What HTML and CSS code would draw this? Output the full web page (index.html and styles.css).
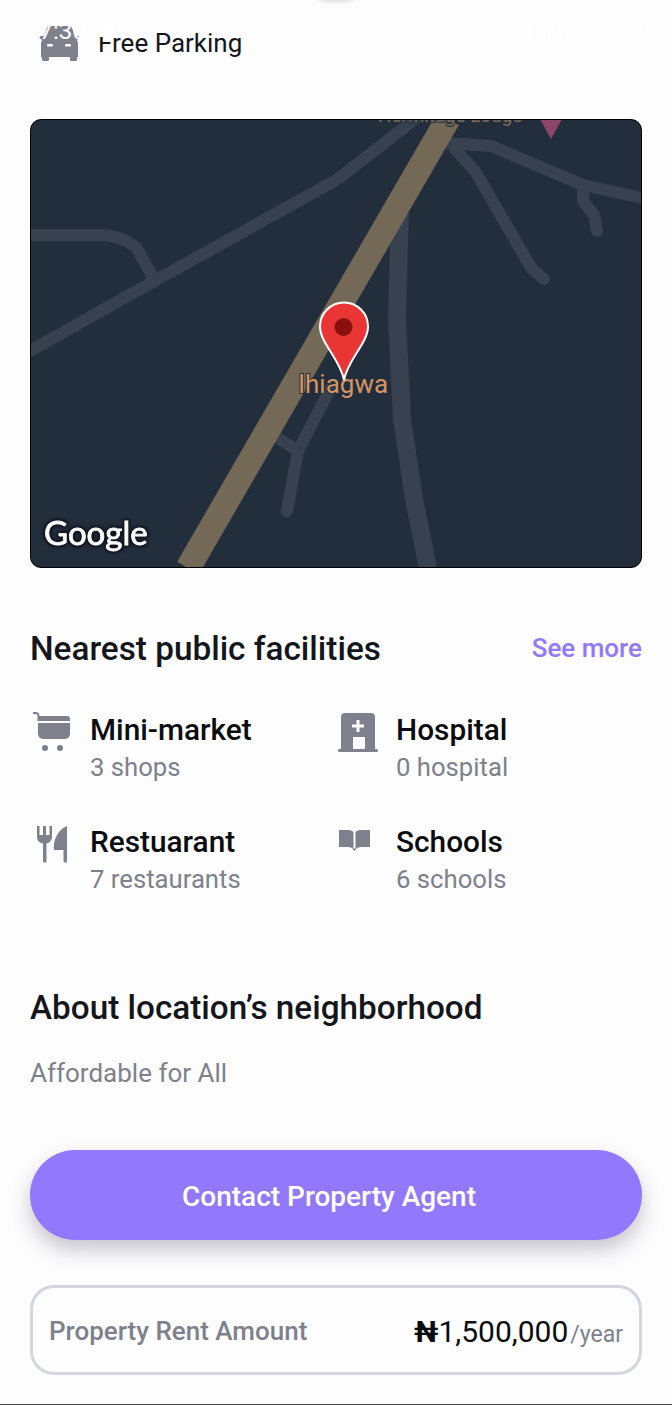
FILE: index.html
```html
<!DOCTYPE html>
<html lang="en">
<head>
  <meta charset="UTF-8" />
  <meta name="viewport" content="width=device-width, initial-scale=1" />
  <title>Property details</title>
  <link rel="stylesheet" href="styles.css">
</head>
<body>
  <div class="notch"></div>

  <div class="status-bar">
    <span class="status-time">17:30</span>
    <svg class="status-gear" width="20" height="20" viewBox="0 0 20 20"><path fill="#fff" d="M10 1l3 3h4v4l2 2-2 2v4h-4l-3 3-3-3H3v-4l-2-2 2-2V4h4z"/></svg>
    <span class="status-right">
      <span>(•)</span>
      <span>.ıl .ıl</span>
      <span class="status-speed">305<br>B/s</span>
      <svg width="38" height="18" viewBox="0 0 38 18"><rect x="1" y="1" width="34" height="16" rx="4" fill="none" stroke="#fff" stroke-width="2"/></svg>
    </span>
  </div>

  <div class="amenity">
    <svg class="amenity-icon" width="42" height="36" viewBox="0 0 42 36">
      <path fill="#7e818c" d="M11 1h20q2 0 3 2l3 8h3q1.500 0 1.500 1.500T40 14l-1 1 1 3v14h-1v2.500a1.500 1.500 0 0 1-1.500 1.500h-4a1.500 1.500 0 0 1-1.500-1.500V32H11v2.500A1.500 1.500 0 0 1 9.500 36h-4A1.500 1.500 0 0 1 4 34.500V32H3V18l1-3-1-1q-1.500 0-1.500-1.500T3 11h3l3-8q1-2 2-2z"/>
      <rect x="9" y="19" width="6" height="2.500" rx="1" fill="#fdfdfe"/>
      <rect x="27" y="19" width="6" height="2.500" rx="1" fill="#fdfdfe"/>
    </svg>
    <span>Free Parking</span>
  </div>

  <div class="map">
    <svg class="map-art" width="612" height="449" viewBox="0 0 612 449">
      <g fill="none" stroke="#37414f" stroke-width="12" stroke-linecap="round" stroke-linejoin="round">
        <path d="M0 116H72Q92 117 106 128L124 160"/>
        <path d="M0 232L128 160L308 60L385 0"/>
        <path d="M370 90L367 200L372 300L384 380L398 449" stroke-width="18" stroke-linecap="butt"/>
        <path d="M243 316L268 332L257 392"/>
        <path d="M268 332L300 270"/>
        <path d="M418 24L461 27L553 66L612 79"/>
        <path d="M425 30L445 52L502 150L514 160"/>
        <path d="M553 66L553 82L564 96L567 112"/>
      </g>
      <path d="M418 0L158 449" fill="none" stroke="#746856" stroke-width="25"/>
      <path d="M510 0h22l-11 20z" fill="#8c4468"/>
      <text class="map-poi" x="348" y="3">Hermitage Lodge</text>
      <text class="map-label" x="313" y="274" text-anchor="middle">Ihiagwa</text>
      <path d="M314 261C310 240 290 224 290 207.500A24 24 0 1 1 338 207.500C338 224 318 240 314 261Z" fill="#ea3535" stroke="#fff" stroke-width="2"/>
      <circle cx="313.500" cy="208" r="9" fill="#8a0f0f"/>
      <text class="map-logo" x="14" y="426">Google</text>
    </svg>
  </div>

  <div class="section-head">
    <h2>Nearest public facilities</h2>
    <a class="see-more">See more</a>
  </div>

  <div class="facilities">
    <div class="facility">
      <svg class="facility-icon" width="42" height="42" viewBox="0 0 42 42">
        <path fill="none" stroke="#7e818c" stroke-width="2" d="M3 3h2.500q3 0 3 3v5"/>
        <path fill="#7e818c" d="M8 6h29a3 3 0 0 1 3 3v2H8z"/>
        <path fill="#7e818c" d="M8 13h32v11a5 5 0 0 1-5 5H13a5 5 0 0 1-5-5z"/>
        <circle cx="15" cy="38" r="3" fill="#7e818c"/>
        <circle cx="30" cy="38" r="3" fill="#7e818c"/>
      </svg>
      <div>
        <div class="facility-name">Mini-market</div>
        <div class="facility-count">3 shops</div>
      </div>
    </div>
    <div class="facility">
      <svg class="facility-icon" width="44" height="42" viewBox="0 0 44 42">
        <path fill="#7e818c" d="M9 3h26a4 4 0 0 1 4 4v33H5V7a4 4 0 0 1 4-4z"/>
        <rect x="2" y="39" width="40" height="3" rx="1.500" fill="#7e818c"/>
        <rect x="17" y="27" width="12" height="12" fill="#fdfdfe"/>
        <path fill="#fdfdfe" d="M20.500 10h3v4.500H28v3h-4.500V22h-3v-4.500H16v-3h4.500z"/>
      </svg>
      <div>
        <div class="facility-name">Hospital</div>
        <div class="facility-count">0 hospital</div>
      </div>
    </div>
    <div class="facility">
      <svg class="facility-icon" width="42" height="42" viewBox="0 0 42 42">
        <path fill="#7e818c" d="M7 4h2.500v9H13V4h3v9h3.500V4H22v11a7 7 0 0 1-5.500 6.500V39a1.700 1.700 0 0 1-3.500 0V21.500A7 7 0 0 1 7 15z"/>
        <path fill="#7e818c" d="M37 4v35a1.700 1.700 0 0 1-3.500 0V28H24c-1-9 3-20 13-24z"/>
      </svg>
      <div>
        <div class="facility-name">Restuarant</div>
        <div class="facility-count">7 restaurants</div>
      </div>
    </div>
    <div class="facility">
      <svg class="facility-icon" width="44" height="42" viewBox="0 0 44 42">
        <path fill="#7e818c" d="M3 8h9c3 0 5 1 5.500 2.500V27c-2-1.500-4-2-7-2H3z"/>
        <path fill="#7e818c" d="M34 8h-9c-3 0-5 1-5.500 2.500V27c2-1.500 4-2 7-2H34z"/>
        <path fill="#7e818c" d="M16 26.500h5L18.500 29z"/>
      </svg>
      <div>
        <div class="facility-name">Schools</div>
        <div class="facility-count">6 schools</div>
      </div>
    </div>
  </div>

  <h2 class="about-title">About location’s neighborhood</h2>
  <p class="about-text">Affordable for All</p>

  <button class="contact-btn">Contact Property Agent</button>

  <div class="rent-box">
    <span class="rent-label">Property Rent Amount</span>
    <span class="rent-value"><b class="naira">₦</b><b>1,500,000</b><small>/year</small></span>
  </div>

  <div class="bottom-line"></div>
</body>
</html>
```

FILE: styles.css
```css
* {
  box-sizing: border-box;
}

body {
  margin: 0;
  padding: 0 30px;
  height: 1405px;
  overflow: hidden;
  position: relative;
  font-family: Roboto, 'Noto Sans', sans-serif;
  background: #fdfdfe;
  color: #14161b;
  display: flex;
  flex-direction: column;
}

.notch {
  position: absolute;
  top: -8px;
  left: 318px;
  width: 36px;
  height: 10px;
  border-radius: 50%;
  background: #d8d8da;
  filter: blur(2px);
}

.status-bar {
  position: absolute;
  top: 17px;
  left: 26px;
  right: 22px;
  display: flex;
  align-items: center;
  color: #fff;
  font-size: 24px;
  z-index: 2;
}

.status-gear {
  margin-left: 11px;
}

.status-right {
  margin-left: auto;
  display: flex;
  align-items: center;
  gap: 10px;
  font-size: 18px;
}

.status-speed {
  font-size: 11px;
  line-height: 11px;
  text-align: center;
}

.amenity {
  display: flex;
  align-items: center;
  gap: 18px;
  margin-top: 25px;
  padding-left: 8px;
  font-size: 26px;
  height: 36px;
}

.amenity-icon {
  flex: none;
}

.map {
  margin-top: 58px;
  height: 449px;
  border: 1px solid #000;
  border-radius: 11px;
  overflow: hidden;
  background: #232e3d;
}

.map-art {
  display: block;
  margin: -1px 0 0 -1px;
}

.map-poi {
  font-size: 18.8px;
  fill: #7d6f5c;
  stroke: #232e3d;
  stroke-width: 2px;
  paint-order: stroke;
}

.map-label {
  font-size: 26px;
  fill: #d59563;
  stroke: #242f3e;
  stroke-width: 2px;
  paint-order: stroke;
}

.map-logo {
  font-family: Lato, sans-serif;
  font-size: 33px;
  font-weight: 400;
  fill: #fff;
  stroke: #fff;
  stroke-width: 0.8px;
  filter: drop-shadow(0 0 1.5px #10151c) drop-shadow(0 0 1.5px #10151c) drop-shadow(0 0 1px #10151c);
}

.section-head {
  display: flex;
  align-items: center;
  justify-content: space-between;
  margin-top: 60px;
}

h2 {
  margin: 0;
  font-size: 33.3px;
  font-weight: 500;
  line-height: 42px;
}

.see-more {
  color: #9278fb;
  font-size: 26px;
  font-weight: 500;
  margin-bottom: 2px;
}

.facilities {
  display: grid;
  grid-template-columns: 306px 1fr;
  row-gap: 28px;
  margin-top: 40px;
}

.facility {
  display: flex;
  gap: 18px;
  height: 84px;
}

.facility:nth-child(even) {
  gap: 16px;
}

.facility-icon {
  flex: none;
}

.facility-name {
  font-size: 29.8px;
  font-weight: 500;
  line-height: 40px;
  color: #0c0d10;
}

.facility-count {
  font-size: 25.7px;
  line-height: 34px;
  color: #7e818c;
}

.about-title {
  margin-top: 81px;
}

.about-text {
  margin: 27px 0 0;
  font-size: 26px;
  line-height: 34px;
  color: #7e818c;
}

.contact-btn {
  margin-top: 60px;
  height: 90px;
  border: none;
  border-radius: 45px;
  padding: 2px 14px 0 0;
  background: #9278fd;
  color: #fff;
  font-family: inherit;
  font-size: 28px;
  font-weight: 500;
  box-shadow: 0 10px 20px rgba(70, 70, 90, 0.3);
}

.rent-box {
  margin-top: 45px;
  height: 90px;
  border: 3px solid #d3d6df;
  border-radius: 24px;
  display: flex;
  align-items: center;
  justify-content: space-between;
  padding: 2px 16px 0;
}

.rent-label {
  color: #7e818c;
  font-size: 26px;
  font-weight: 500;
}

.rent-value b {
  font-size: 30px;
  font-weight: 400;
  color: #0c0d10;
}

.rent-value .naira {
  font-weight: 700;
}

.rent-value small {
  font-size: 23px;
  color: #7e818c;
  margin-left: 2px;
}

.bottom-line {
  position: absolute;
  left: 0;
  right: 0;
  bottom: 0;
  height: 1px;
  background: #444;
}
```
